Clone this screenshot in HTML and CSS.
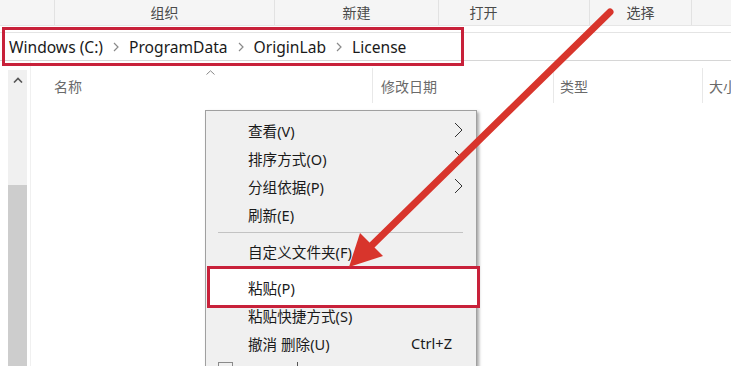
FILE: index.html
```html
<!DOCTYPE html>
<html>
<head>
<meta charset="utf-8">
<link rel="stylesheet" href="styles.css">
</head>
<body>
<div class="ribbon">
  <div class="grp g0"></div>
  <div class="grp g1">组织</div>
  <div class="grp g2">新建</div>
  <div class="grp g3">打开</div>
  <div class="grp g4">选择</div>
  <div class="grp g5"></div>
</div>
<div class="address-row">
  <div class="addrbox">
    <span class="crumb">Windows (C:)</span>
    <svg class="sep" width="6" height="10" viewBox="0 0 6 10"><path d="M1 1 L5 5 L1 9" fill="none" stroke="#8a8a8a" stroke-width="1.2"/></svg>
    <span class="crumb">ProgramData</span>
    <svg class="sep" width="6" height="10" viewBox="0 0 6 10"><path d="M1 1 L5 5 L1 9" fill="none" stroke="#8a8a8a" stroke-width="1.2"/></svg>
    <span class="crumb">OriginLab</span>
    <svg class="sep" width="6" height="10" viewBox="0 0 6 10"><path d="M1 1 L5 5 L1 9" fill="none" stroke="#8a8a8a" stroke-width="1.2"/></svg>
    <span class="crumb">License</span>
  </div>
  <div class="annot-addr"></div>
</div>
<div class="main">
  <div class="scroll">
    <div class="scroll-up"><svg width="10" height="6" viewBox="0 0 10 6"><path d="M1 5.5 L5 1.5 L9 5.5" fill="none" stroke="#555" stroke-width="1.6"/></svg></div>
    <div class="scroll-thumb"></div>
  </div>
  <div class="list">
    <div class="header">
      <div class="col c-name">名称<svg class="sort" width="9" height="5" viewBox="0 0 9 5"><path d="M0.5 4.5 L4.5 0.8 L8.5 4.5" fill="none" stroke="#888" stroke-width="1"/></svg></div>
      <div class="col c-date">修改日期</div>
      <div class="col c-type">类型</div>
      <div class="col c-size">大小</div>
    </div>
  </div>
</div>

<div class="menu">
  <div class="item"><span>查看(V)</span><svg class="chev" width="9" height="16" viewBox="0 0 9 16"><path d="M1 1 L8 8 L1 15" fill="none" stroke="#333" stroke-width="1"/></svg></div>
  <div class="item"><span>排序方式(O)</span><svg class="chev" width="9" height="16" viewBox="0 0 9 16"><path d="M1 1 L8 8 L1 15" fill="none" stroke="#333" stroke-width="1"/></svg></div>
  <div class="item"><span>分组依据(P)</span><svg class="chev" width="9" height="16" viewBox="0 0 9 16"><path d="M1 1 L8 8 L1 15" fill="none" stroke="#333" stroke-width="1"/></svg></div>
  <div class="item"><span>刷新(E)</span></div>
  <div class="msep"></div>
  <div class="item"><span>自定义文件夹(F)...</span></div>
  <div class="item paste"><div class="annot-paste"></div><span>粘贴(P)</span></div>
  <div class="item"><span>粘贴快捷方式(S)</span></div>
  <div class="item"><span>撤消 删除(U)</span><span class="key">Ctrl+Z</span></div>
  <div class="item next"><span class="icon"></span><span class="tick"></span></div>
</div>

<svg class="arrow" width="731" height="366" viewBox="0 0 731 366">
  <line x1="610" y1="12" x2="368" y2="249" stroke="#d8352c" stroke-width="7" stroke-linecap="round"/>
  <polygon points="349,267 360,233 383,256" fill="#d8352c"/>
</svg>
</body>
</html>
```

FILE: styles.css
```css
* { box-sizing: border-box; }
html, body { margin: 0; padding: 0; }
body {
  width: 731px;
  height: 366px;
  overflow: hidden;
  position: relative;
  background: #fff;
  font-family: "Noto Sans", "Noto Sans CJK SC", sans-serif;
  color: #1a1a1a;
}

.ribbon {
  display: flex;
  height: 26px;
  background: #f5f5f5;
  border-bottom: 1px solid #e6e6e6;
}
.grp {
  display: flex;
  align-items: center;
  justify-content: center;
  font-size: 14px;
  color: #4a4a4a;
  border-right: 1px solid #e2e2e2;
  padding-bottom: 2px;
  flex: none;
}
.g0 { width: 55px; }
.g1 { width: 220px; }
.g2 { width: 164px; }
.g3 { width: 151px; padding-right: 61px; }
.g4 { width: 102px; }
.g5 { flex: 1; border-right: none; }

.address-row {
  position: relative;
  height: 35px;
  padding-top: 6px;
}
.addrbox {
  height: 29px;
  border-top: 1px solid #e4e4e4;
  border-bottom: 1px solid #d6d6d6;
  display: flex;
  align-items: center;
  padding-left: 9px;
  font-size: 15.6px;
  color: #1a1a1a;
}
.crumb { white-space: nowrap; }
.sep { margin: 0 10px; flex: none; }
.annot-addr {
  position: absolute;
  left: 2px;
  top: 1px;
  width: 462px;
  height: 39px;
  border: 3px solid #c8213a;
}

.main {
  display: flex;
  height: 305px;
}
.scroll {
  flex: none;
  margin-left: 8px;
  margin-top: 9px;
  width: 19px;
  background: #f0f0f0;
  display: flex;
  flex-direction: column;
}
.scroll-up {
  height: 20px;
  display: flex;
  align-items: center;
  justify-content: center;
}
.scroll-thumb {
  margin-top: 95px;
  flex: 1;
  background: #cdcdcd;
}
.list {
  flex: 1;
  min-width: 0;
  margin-left: 3px;
  border-left: 1px solid #f0f0f0;
}
.header {
  display: flex;
  margin-top: 7px;
  height: 35px;
  font-size: 14px;
  color: #6a6a6a;
}
.col {
  display: flex;
  align-items: center;
  position: relative;
  flex: none;
}
.c-name { width: 341px; padding-left: 23px; }
.c-date { width: 181px; padding-left: 8px; border-left: 1px solid #e8e8e8; }
.c-type { width: 149px; padding-left: 6px; border-left: 1px solid #e8e8e8; }
.c-size { flex: 1 1 auto; min-width: 0; padding-left: 6px; border-left: 1px solid #e8e8e8; white-space: nowrap; overflow: hidden; }
.sort {
  position: absolute;
  left: 175px;
  top: 2px;
}

.menu {
  position: absolute;
  z-index: 1;
  left: 205px;
  top: 110px;
  width: 272px;
  height: 290px;
  background: #f0f0f0;
  border: 1px solid #a0a0a0;
  box-shadow: 2px 2px 3px rgba(0, 0, 0, 0.35);
  padding-top: 5px;
  font-size: 14.6px;
}
.item {
  height: 28px;
  display: flex;
  align-items: center;
  justify-content: space-between;
  padding-left: 42px;
  padding-right: 13px;
  position: relative;
  white-space: nowrap;
}
.key { margin-right: 11px; }
.msep {
  height: 9px;
  margin: 0 13px 0 12px;
  padding-top: 4px;
}
.msep::before {
  content: "";
  display: block;
  border-top: 1px solid #c3c3c3;
}
.paste { margin-top: 8px; }
.annot-paste {
  position: absolute;
  z-index: -1;
  left: 1px;
  top: -7px;
  width: 273px;
  height: 42px;
  border: 3px solid #c8213a;
  background: #fff;
}
.next { justify-content: flex-start; padding-left: 12px; align-items: flex-start; padding-top: 5px; }
.next .icon {
  width: 15px;
  height: 12px;
  border: 1px solid #8a8a8a;
  margin-right: 64px;
}
.next .tick {
  width: 1px;
  height: 8px;
  background: #555;
}

.arrow {
  position: absolute;
  left: 0;
  top: 0;
  z-index: 2;
  pointer-events: none;
}
```
